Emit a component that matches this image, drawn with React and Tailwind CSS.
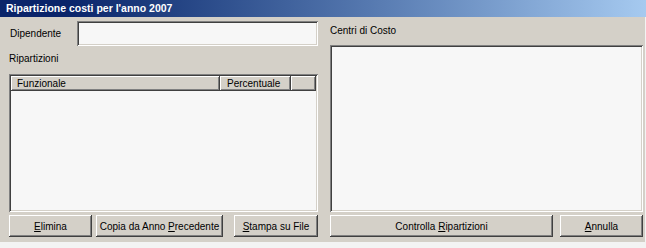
import React from "react";

const raised =
  "shadow-[inset_-1px_-1px_#404040,inset_1px_1px_#ffffff,inset_-2px_-2px_#808080]";
const sunken =
  "shadow-[inset_1px_1px_#808080,inset_-1px_-1px_#ffffff,inset_2px_2px_#404040,inset_-2px_-2px_#d4d0c8]";

function Btn({ children, className = "" }) {
  return (
    <button
      className={`h-[22px] bg-[#d4d0c8] text-black text-[10px] flex items-center justify-center ${raised} ${className}`}
    >
      <span>{children}</span>
    </button>
  );
}

export default function App() {
  return (
    <div
      className="w-[646px] h-[248px] bg-[#f3f3f3] overflow-hidden"
      style={{ fontFamily: '"Liberation Sans", Arial, sans-serif' }}
    >
      <div className="w-[645px] h-[242px] bg-[#d4d0c8] flex flex-col">
        {/* Title bar */}
        <div className="h-[17px] w-[646px] bg-linear-to-r from-[#0a246a] from-10% to-[#a6caf0] flex items-center pl-[6px]">
          <span className="text-white font-bold text-[10.5px] leading-none">
            Ripartizione costi per l'anno 2007
          </span>
        </div>

        <div className="flex flex-1">
          {/* Left column */}
          <div className="ml-[9px] w-[309px] flex flex-col">
            <div className="mt-[4px] h-[25px] flex items-center">
              <span className="pl-[1px] text-[10px]">Dipendente</span>
              <div className={`ml-auto w-[241px] h-[25px] bg-[#f7f7f7] ${sunken}`} />
            </div>
            <div className="mt-[4px] h-[16px] flex items-center text-[10px]">
              Ripartizioni
            </div>
            <div className={`mt-[8px] h-[138px] bg-[#f7f7f7] p-[2px] ${sunken}`}>
              <div className="flex h-[15px] text-[10px]">
                <div className={`w-[209px] bg-[#d4d0c8] pl-[6px] flex items-center ${raised}`}>
                  Funzionale
                </div>
                <div className={`w-[71px] bg-[#d4d0c8] pl-[7px] flex items-center ${raised}`}>
                  Percentuale
                </div>
                <div className={`flex-1 bg-[#d4d0c8] ${raised}`} />
              </div>
            </div>
            <div className="mt-[3px] flex">
              <Btn className="w-[83px]">
                <span className="underline">E</span>limina
              </Btn>
              <Btn className="w-[127px] ml-[4px]">
                Copia da Anno <span className="underline">P</span>recedente
              </Btn>
              <Btn className="w-[84px] ml-[11px]">
                <span className="underline">S</span>tampa su File
              </Btn>
            </div>
          </div>

          {/* Right column */}
          <div className="ml-[12px] w-[313px] flex flex-col">
            <div className="mt-[5px] h-[16px] flex items-center text-[10px]">
              Centri di Costo
            </div>
            <div className={`mt-[7px] h-[167px] bg-[#f7f7f7] ${sunken}`} />
            <div className="mt-[3px] flex">
              <Btn className="w-[223px]">
                Controlla <span className="underline">R</span>ipartizioni
              </Btn>
              <Btn className="w-[83px] ml-[7px]">
                <span className="underline">A</span>nnulla
              </Btn>
            </div>
          </div>
        </div>
      </div>
    </div>
  );
}
